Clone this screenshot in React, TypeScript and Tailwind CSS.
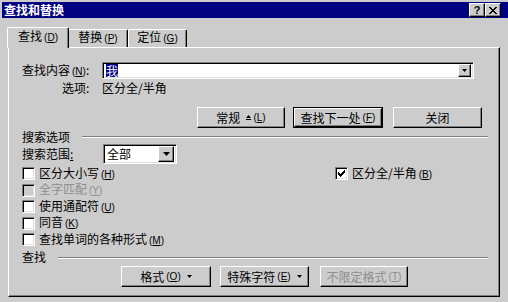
import React from "react";

const raised =
  "border border-t-white border-l-white border-r-black border-b-black shadow-[inset_-1px_-1px_0_#808080]";
const sunken =
  "border border-t-[#808080] border-l-[#808080] border-r-white border-b-white shadow-[inset_1px_1px_0_#000,inset_-1px_-1px_0_#dfdfdf]";

function Key({ k }: { k: string }) {
  return (
    <span className="ml-[2px] font-['Liberation_Sans',sans-serif] text-[10px]">
      (<span className="underline">{k}</span>)
    </span>
  );
}

function Btn({
  className,
  disabled,
  children,
}: {
  className?: string;
  disabled?: boolean;
  children: React.ReactNode;
}) {
  return (
    <div
      className={`${raised} bg-[#cccccc] flex items-center justify-center ${
        disabled ? "text-[#8e8e8e]" : ""
      } ${className ?? ""}`}
    >
      {children}
    </div>
  );
}

function DownTri({ w = 5, h = 3 }: { w?: number; h?: number }) {
  return (
    <svg width={w} height={h} viewBox={`0 0 ${w} ${h}`} className="ml-[6px]">
      <polygon points={`0,0 ${w},0 ${w / 2},${h}`} fill="black" />
    </svg>
  );
}

function UpIcon() {
  return (
    <svg width="5" height="6" viewBox="0 0 5 6" className="ml-[6px]">
      <polygon points="2.5,0 5,3 0,3" fill="black" />
      <rect x="0" y="4" width="5" height="1" fill="black" />
    </svg>
  );
}

function Check({ checked, disabled }: { checked?: boolean; disabled?: boolean }) {
  // classic 7x7 tick, one column at a time
  const cols = [2, 3, 4, 3, 2, 1, 0];
  return (
    <span
      className={`w-[13px] h-[13px] shrink-0 ${sunken} ${
        disabled ? "bg-[#cccccc]" : "bg-white"
      } flex items-center justify-center`}
    >
      {checked && (
        <svg width="7" height="7" viewBox="0 0 7 7" shapeRendering="crispEdges">
          {cols.map((y, x) => (
            <rect key={x} x={x} y={y} width="1" height="3" fill="black" />
          ))}
        </svg>
      )}
    </span>
  );
}

function TitleBtn({ children }: { children: React.ReactNode }) {
  return (
    <div className={`w-[16px] h-[14px] ${raised} bg-[#cccccc] flex items-center justify-center`}>
      {children}
    </div>
  );
}

function CloseGlyph() {
  const rows = [
    [[0, 2], [6, 2]],
    [[1, 2], [5, 2]],
    [[2, 4]],
    [[3, 2]],
    [[2, 4]],
    [[1, 2], [5, 2]],
    [[0, 2], [6, 2]],
  ];
  return (
    <svg width="8" height="7" viewBox="0 0 8 7" shapeRendering="crispEdges">
      {rows.map((r, y) =>
        r.map(([x, w], i) => <rect key={`${y}-${i}`} x={x} y={y} width={w} height="1" fill="black" />)
      )}
    </svg>
  );
}

function CheckRow({
  label,
  k,
  disabled,
  className,
}: {
  label: string;
  k: string;
  disabled?: boolean;
  className?: string;
}) {
  return (
    <div className={`flex items-center ${disabled ? "text-[#8e8e8e]" : ""} ${className ?? ""}`}>
      <Check disabled={disabled} />
      <span className="ml-[4px]">
        {label}
        <Key k={k} />
      </span>
    </div>
  );
}

export default function App() {
  return (
    <div className="w-[508px] h-[302px] overflow-hidden bg-[#cccccc] pt-[2px] pl-[2px] text-[12px] leading-[14px] text-black font-['Noto_Sans_CJK_SC','Liberation_Sans',sans-serif]">
      {/* Title bar */}
      <div className="h-[16px] bg-[#000080] flex items-center pl-[2px] pr-[7px]">
        <span className="text-white font-bold">查找和替换</span>
        <div className="ml-auto flex">
          <TitleBtn>
            <span className="font-['Liberation_Sans',sans-serif] font-bold text-[11px] leading-none">?</span>
          </TitleBtn>
          <TitleBtn>
            <CloseGlyph />
          </TitleBtn>
        </div>
      </div>

      {/* Tabs */}
      <div className="mt-[9px] ml-[5px] h-[21px] -mb-[1px] flex items-end relative z-10">
        <div className="w-[62px] h-[21px] border-t border-l border-r border-t-white border-l-white border-r-black shadow-[inset_-1px_0_0_#808080] rounded-t-[2px] bg-[#cccccc] flex justify-center pt-[1px]">
          <span>
            查找
            <Key k="D" />
          </span>
        </div>
        <div className="w-[59px] h-[18px] mb-[1px] border-t border-r border-t-white border-r-black shadow-[inset_-1px_0_0_#808080] rounded-tr-[2px] flex justify-center">
          <span>
            替换
            <Key k="P" />
          </span>
        </div>
        <div className="w-[59px] h-[18px] mb-[1px] border-t border-l border-r border-t-white border-l-white border-r-black shadow-[inset_-1px_0_0_#808080] rounded-t-[2px] flex justify-center">
          <span>
            定位
            <Key k="G" />
          </span>
        </div>
      </div>

      {/* Panel */}
      <div
        className={`ml-[6px] w-[492px] h-[250px] border border-t-white border-l-white border-r-black border-b-black shadow-[inset_-1px_-1px_0_#808080] pl-[13px] pr-[11px] flex flex-col`}
      >
        {/* Find what */}
        <div className="mt-[14px] h-[17px] flex items-center">
          <span className="w-[80px]">
            查找内容
            <Key k="N" />:
          </span>
          <div className={`w-[372px] h-[17px] ${sunken} bg-white flex items-center pl-[3px] pr-[2px]`}>
            <span className="bg-[#000080] text-white h-[13px] leading-[13px]">我</span>
            <div className={`ml-auto w-[13px] h-[13px] ${raised} bg-[#cccccc] flex items-center justify-center`}>
              <svg width="5" height="3" viewBox="0 0 5 3">
                <polygon points="0,0 5,0 2.5,3" fill="black" />
              </svg>
            </div>
          </div>
        </div>

        {/* Options summary */}
        <div className="mt-[2px] h-[14px] flex items-center">
          <span className="w-[80px] pl-[40px]">选项:</span>
          <span>区分全/半角</span>
        </div>

        {/* Main buttons */}
        <div className="mt-[12px] h-[21px] flex">
          <Btn className="ml-[175px] w-[88px]">
            常规
            <UpIcon />
            <Key k="L" />
          </Btn>
          <div className="ml-[8px] w-[90px] border border-black">
            <Btn className="w-full h-full">
              查找下一处
              <Key k="F" />
            </Btn>
          </div>
          <Btn className="ml-[10px] w-[89px]">关闭</Btn>
        </div>

        {/* Search options */}
        <div className="mt-[3px] h-[12px] flex items-center">
          <span>搜索选项</span>
          <div className="ml-[12px] flex-1 h-[2px] border-t border-b border-t-[#808080] border-b-white" />
        </div>

        <div className="h-[21px] flex items-center">
          <span className="w-[81px]">
            搜索范围<span className="underline">:</span>
          </span>
          <div className={`w-[74px] h-[20px] ${sunken} bg-white flex items-center pl-[3px] pr-[2px]`}>
            <span>全部</span>
            <div className={`ml-auto w-[16px] h-[16px] ${raised} bg-[#cccccc] flex items-center justify-center`}>
              <svg width="7" height="4" viewBox="0 0 7 4">
                <polygon points="0,0 7,0 3.5,4" fill="black" />
              </svg>
            </div>
          </div>
        </div>

        <div className="mt-[1px] h-[17px] flex items-center">
          <CheckRow label="区分大小写" k="H" className="w-[313px]" />
          <div className="flex items-center">
            <Check checked />
            <span className="ml-[4px]">
              区分全/半角
              <Key k="B" />
            </span>
          </div>
        </div>
        <CheckRow label="全字匹配" k="Y" disabled className="h-[16px]" />
        <CheckRow label="使用通配符" k="U" className="h-[17px]" />
        <CheckRow label="同音" k="K" className="h-[16px]" />
        <CheckRow label="查找单词的各种形式" k="M" className="h-[17px]" />

        {/* Find section */}
        <div className="mt-[2px] h-[14px] flex items-center">
          <span>查找</span>
          <div className="ml-[12px] flex-1 h-[2px] mt-[2px] border-t border-b border-t-[#808080] border-b-white" />
        </div>

        <div className="mt-[2px] h-[21px] flex">
          <Btn className="ml-[99px] w-[90px]">
            格式
            <Key k="O" />
            <DownTri />
          </Btn>
          <Btn className="ml-[9px] w-[89px]">
            特殊字符
            <Key k="E" />
            <DownTri />
          </Btn>
          <Btn disabled className="ml-[11px] w-[88px]">
            不限定格式
            <Key k="T" />
          </Btn>
        </div>
      </div>
    </div>
  );
}
